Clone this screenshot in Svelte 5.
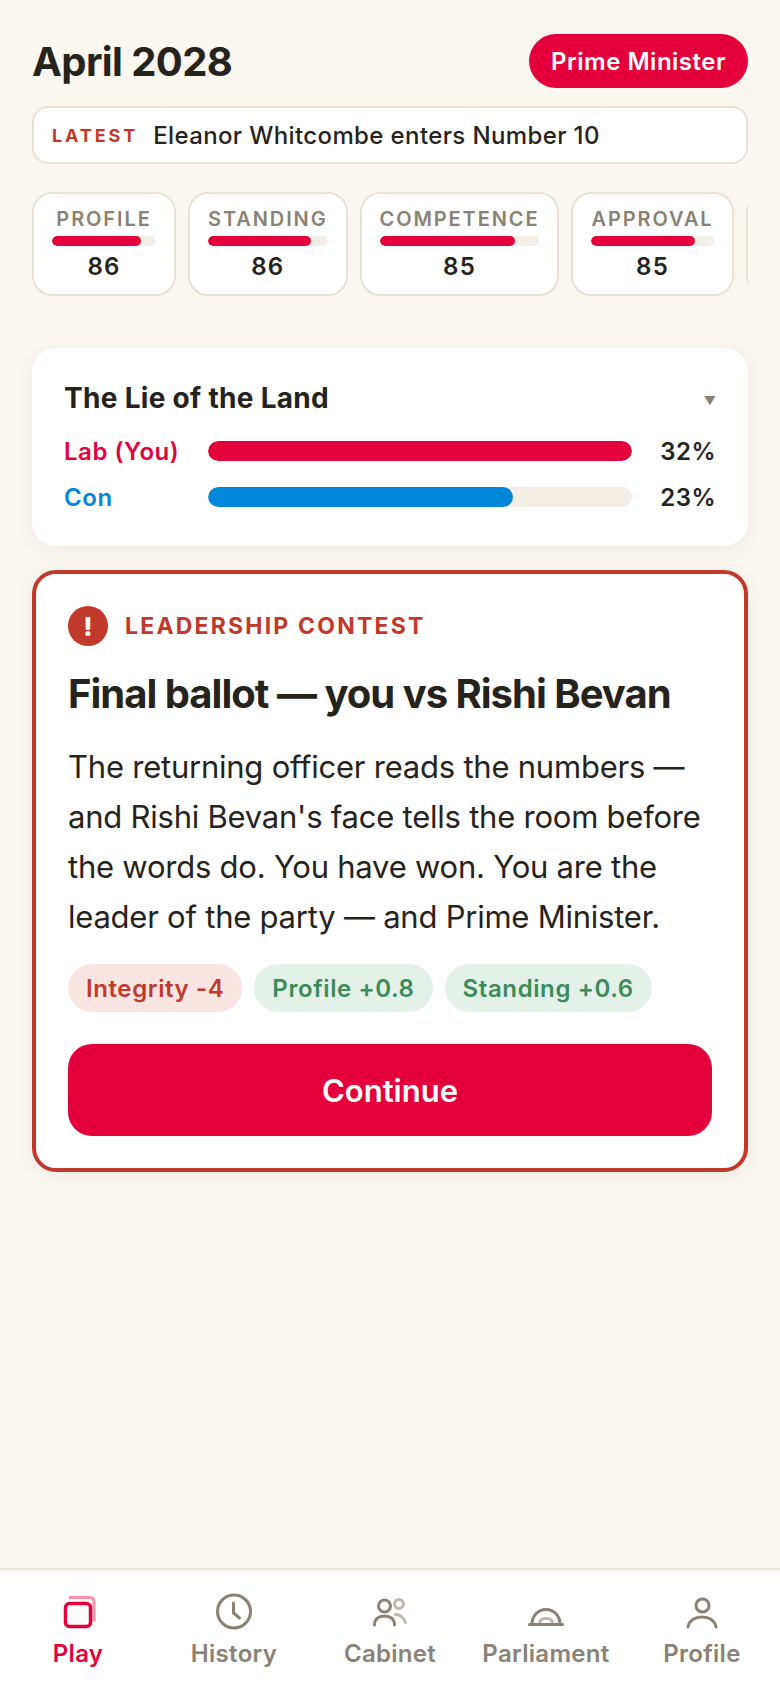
<script>
  const stats = [
    { label: 'PROFILE', value: 86 },
    { label: 'STANDING', value: 86 },
    { label: 'COMPETENCE', value: 85 },
    { label: 'APPROVAL', value: 85 }
  ];
  const parties = [
    { name: 'Lab (You)', pct: 32, width: 100, cls: 'lab' },
    { name: 'Con', pct: 23, width: 72, cls: 'con' }
  ];
  const effects = [
    { text: 'Integrity -4', cls: 'neg' },
    { text: 'Profile +0.8', cls: 'pos' },
    { text: 'Standing +0.6', cls: 'pos' }
  ];
</script>

<div class="page">
  <main>
    <header>
      <h1>April 2028</h1>
      <div class="role">Prime Minister</div>
    </header>
    <div class="ticker"><span class="tag">LATEST</span><span class="news">Eleanor Whitcombe enters Number 10</span></div>
    <div class="stats">
      {#each stats as s}
        <div class="stat">
          <div class="stat-label">{s.label}</div>
          <div class="track small"><div class="fill lab" style="width:{s.value}%"></div></div>
          <div class="stat-value">{s.value}</div>
        </div>
      {/each}
      <div class="stat peek"></div>
    </div>
    <section class="polls">
      <div class="polls-head"><h2>The Lie of the Land</h2><span class="caret">▼</span></div>
      {#each parties as p}
        <div class="party">
          <span class="pname {p.cls}">{p.name}</span>
          <div class="track big"><div class="fill {p.cls}" style="width:{p.width}%"></div></div>
          <span class="pct">{p.pct}%</span>
        </div>
      {/each}
    </section>
    <section class="event">
      <div class="event-head">
        <span class="alert">!</span>
        <span class="kicker">LEADERSHIP CONTEST</span>
      </div>
      <h3>Final ballot — you vs Rishi Bevan</h3>
      <p>The returning officer reads the numbers — and Rishi Bevan's face tells the room before the words do. You have won. You are the leader of the party — and Prime Minister.</p>
      <div class="effects">
        {#each effects as e}<span class="effect {e.cls}">{e.text}</span>{/each}
      </div>
      <button>Continue</button>
    </section>
  </main>
  <nav>
    <div class="tab active">
      <svg viewBox="0 0 44 44" width="44" height="44" fill="none"><path d="M13 5.500h21a4 4 0 0 1 4 4v20" stroke="#ff8fa8" stroke-width="3"/><rect x="9.500" y="11.500" width="25" height="23" rx="4" fill="#fff" stroke="#e4003b" stroke-width="3.500"/></svg>
      <span>Play</span>
    </div>
    <div class="tab">
      <svg viewBox="0 0 44 44" width="44" height="44" fill="none" stroke="#8a8274" stroke-width="3" stroke-linecap="round"><circle cx="22" cy="19.500" r="16.500"/><path d="M21.500 11v10l6 5"/></svg>
      <span>History</span>
    </div>
    <div class="tab">
      <svg viewBox="0 0 44 44" width="44" height="44" fill="none" stroke="#8a8274" stroke-width="3" stroke-linecap="round"><circle cx="16.500" cy="14" r="6"/><path d="M6.500 33c0-6 4-9 10-9s10 3 10 9"/><circle cx="31" cy="12" r="4.500" stroke="#bdb8ad"/><path d="M27.500 22.500c4 0 8 3 10 8" stroke="#bdb8ad"/></svg>
      <span>Cabinet</span>
    </div>
    <div class="tab">
      <svg viewBox="0 0 44 44" width="44" height="44" fill="none" stroke-linecap="round" stroke-width="3"><path d="M8 32c0-8 6-14.500 14-14.500s14 6.500 14 14.500" stroke="#8a8274"/><path d="M15.500 31c0-3 3-4.500 6.500-4.500s6.500 1.500 6.500 4.500" stroke="#bdb8ad"/><path d="M5.500 32.500h33" stroke="#8a8274"/></svg>
      <span>Parliament</span>
    </div>
    <div class="tab">
      <svg viewBox="0 0 44 44" width="44" height="44" fill="none" stroke="#8a8274" stroke-width="3" stroke-linecap="round"><circle cx="22.500" cy="13.500" r="6.500"/><path d="M8 35c1-6.500 7-10 14-10s13 3.500 14 10"/></svg>
      <span>Profile</span>
    </div>
  </nav>
</div>

<style>
  :global(body) { margin: 0; background: #faf7f0; }
  .page {
    width: 780px; height: 1688px; display: flex; flex-direction: column;
    font-family: Inter, "Liberation Sans", sans-serif; color: #26231c; background: #faf7f0;
  }
  main { flex: 1; min-height: 0; padding: 34px 32px 0; display: flex; flex-direction: column; overflow: hidden; }
  header { display: flex; justify-content: space-between; align-items: center; height: 54px; }
  h1 { margin: 0; font-size: 40px; font-weight: 700; letter-spacing: -0.6px; }
  .role { background: #e4003b; color: #fff; height: 54px; border-radius: 27px; padding: 0 22px; display: flex; align-items: center; font-size: 24px; font-weight: 600; letter-spacing: .5px; }
  .ticker { margin-top: 18px; height: 58px; box-sizing: border-box; background: #fff; border: 2px solid #e8e2d4; border-radius: 16px; display: flex; align-items: center; padding: 0 18px; gap: 15px; }
  .tag { font-size: 18px; font-weight: 700; letter-spacing: 2.900px; color: #c0392b; }
  .news { font-size: 24px; font-weight: 500; letter-spacing: .38px; }
  .stats { margin-top: 28px; display: flex; gap: 12px; overflow: hidden; flex-shrink: 0; }
  .stat { flex-shrink: 0; box-sizing: border-box; min-width: 144px; height: 104px; background: #fff; border: 2px solid #e8e2d4; border-radius: 20px; padding: 12px 18px 0; text-align: center; }
  .stat-label { font-size: 20px; font-weight: 600; letter-spacing: 1.900px; color: #8a8274; line-height: 26px; }
  .track { background: #f3efe7; border-radius: 99px; overflow: hidden; }
  .small { height: 10px; margin-top: 4px; }
  .big { height: 20px; flex: 1; }
  .fill { height: 100%; border-radius: 99px; }
  .fill.lab { background: #e4003b; }
  .fill.con { background: #0087dc; }
  .stat-value { font-size: 24px; font-weight: 600; margin-top: 6px; line-height: 30px; letter-spacing: 1.200px; }
  .polls { margin-top: 52px; height: 198px; box-sizing: border-box; background: #fff; border-radius: 24px; padding: 34px 32px 0; box-shadow: 0 4px 20px rgba(38,35,28,.06); flex-shrink: 0; }
  .polls-head { display: flex; justify-content: space-between; align-items: center; height: 32px; margin-bottom: 14px; }
  h2 { margin: 0; font-size: 28px; font-weight: 700; letter-spacing: .3px; }
  .caret { font-size: 12px; color: #8a8274; margin-top: 4px; }
  .party { display: flex; align-items: center; height: 46px; }
  .pname { width: 144px; font-size: 24px; font-weight: 600; letter-spacing: .55px; }
  .pname.lab { color: #e4003b; }
  .pname.con { color: #0087dc; }
  .pct { width: 84px; text-align: right; font-size: 24px; font-weight: 600; letter-spacing: .5px; }
  .event { margin-top: 24px; box-sizing: border-box; height: 602px; background: #fff; border: 4px solid #c0392b; border-radius: 24px; padding: 32px; box-shadow: 0 4px 20px rgba(38,35,28,.06); flex-shrink: 0; }
  .event-head { display: flex; align-items: center; gap: 17px; height: 40px; }
  .alert { width: 40px; height: 40px; border-radius: 50%; background: #c0392b; color: #fff; display: flex; align-items: center; justify-content: center; font-size: 26px; font-weight: 800; }
  .kicker { font-size: 23px; font-weight: 700; letter-spacing: 2.200px; color: #c0392b; }
  h3 { margin: 24px 0 0; font-size: 40px; font-weight: 700; letter-spacing: -1px; line-height: 48px; }
  p { margin: 24px 0 0; font-size: 31px; line-height: 50px; letter-spacing: -0.230px; }
  .effects { margin-top: 22px; display: flex; gap: 12px; }
  .effect { height: 48px; border-radius: 24px; padding: 0 18px; display: flex; align-items: center; font-size: 24px; font-weight: 600; letter-spacing: .6px; }
  .neg { background: #fae5e3; color: #c0392b; }
  .pos { background: #e3f1e8; color: #3c8c5a; }
  button { display: block; width: 100%; height: 92px; margin-top: 32px; border: 0; border-radius: 24px; background: #e4003b; color: #fff; font: 600 31px Inter, sans-serif; }
  nav { flex-shrink: 0; height: 120px; box-sizing: border-box; background: #fff; border-top: 2px solid #e8e2d4; display: flex; justify-content: space-around; padding-top: 22px; }
  .tab { flex: 1; display: flex; flex-direction: column; align-items: center; color: #8a8274; font-size: 24px; font-weight: 600; letter-spacing: .3px; }
  .tab svg { display: block; }
  .tab span { line-height: 32px; margin-top: 2px; }
  .tab.active { color: #e4003b; }
</style>
